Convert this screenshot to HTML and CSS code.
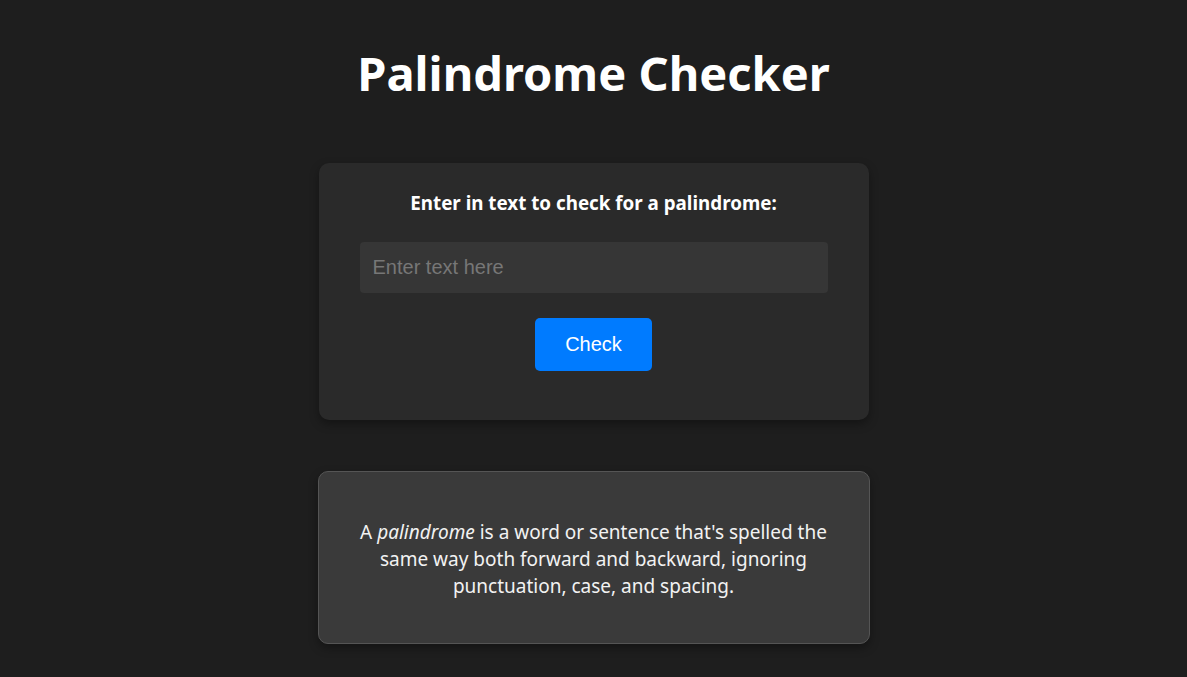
FILE: index.html
```html
<!DOCTYPE html>
<html lang="en">
<head>
<meta charset="utf-8">
<title>Palindrome Checker</title>
<link rel="stylesheet" href="styles.css">
</head>
<body>
<main class="page">
  <h1 class="title">Palindrome Checker</h1>
  <section class="checker">
    <label class="checker-label" for="text-input">Enter in text to check for a palindrome:</label>
    <input class="text-input" id="text-input" type="text" placeholder="Enter text here">
    <button class="check-btn" type="button">Check</button>
  </section>
  <section class="info">
    <p class="info-text">A <em>palindrome</em> is a word or sentence that's spelled the same way both forward and backward, ignoring punctuation, case, and spacing.</p>
  </section>
</main>
</body>
</html>
```

FILE: styles.css
```css
* { box-sizing: border-box; }
html, body { margin: 0; padding: 0; }
body {
  background: #1e1e1e;
  color: #ffffff;
  font-family: "Noto Sans", "Open Sans", sans-serif;
  min-height: 677px;
}
.page {
  display: flex;
  flex-direction: column;
  align-items: center;
  padding-top: 40px;
}
.title {
  margin: 0;
  font-size: 47px;
  line-height: 66px;
  font-weight: 700;
}
.checker {
  margin-top: 57px;
  width: 550px;
  height: 257px;
  background: #2a2a2a;
  border-radius: 10px;
  box-shadow: 0 4px 10px rgba(0, 0, 0, 0.35);
  display: flex;
  flex-direction: column;
  align-items: center;
  padding-top: 28px;
}
.checker-label {
  font-size: 18.8px;
  line-height: 24px;
  font-weight: 700;
}
.text-input {
  margin-top: 27px;
  width: 468px;
  height: 51px;
  border: none;
  border-radius: 4px;
  background: #363636;
  padding: 0 13px;
  font-family: "Liberation Sans", Arial, sans-serif;
  font-size: 20px;
  color: #ffffff;
  outline: none;
}
.text-input::placeholder { color: #777777; }
.check-btn {
  margin-top: 25px;
  width: 117px;
  height: 53px;
  border: none;
  border-radius: 5px;
  background: #007bff;
  color: #ffffff;
  font-family: "Liberation Sans", Arial, sans-serif;
  font-size: 20px;
  cursor: pointer;
}
.info {
  margin-top: 51px;
  width: 552px;
  height: 173px;
  background: #3a3a3a;
  border: 1px solid #555555;
  border-radius: 10px;
  box-shadow: 0 4px 10px rgba(0, 0, 0, 0.35);
  display: flex;
  align-items: center;
  justify-content: center;
  padding: 4px 36px 0;
}
.info-text {
  margin: 0;
  text-align: center;
  font-size: 19px;
  line-height: 27px;
  color: #f2f2f2;
}
```
